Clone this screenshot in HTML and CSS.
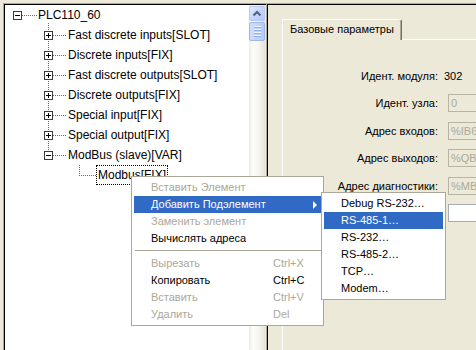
FILE: index.html
```html
<!DOCTYPE html>
<html>
<head>
<meta charset="utf-8">
<link rel="stylesheet" href="styles.css">
</head>
<body>
<div class="app">
  <div class="tree-pane">
    <div class="tree-inner">
      <div class="tree">
        <div class="row root"><span class="exp minus"></span><span class="conn"></span><span class="label">PLC110_60</span></div>
        <div class="children">
          <div class="row l1"><span class="exp plus"></span><span class="conn"></span><span class="label">Fast discrete inputs[SLOT]</span></div>
          <div class="row l1"><span class="exp plus"></span><span class="conn"></span><span class="label">Discrete inputs[FIX]</span></div>
          <div class="row l1"><span class="exp plus"></span><span class="conn"></span><span class="label">Fast discrete outputs[SLOT]</span></div>
          <div class="row l1"><span class="exp plus"></span><span class="conn"></span><span class="label">Discrete outputs[FIX]</span></div>
          <div class="row l1"><span class="exp plus"></span><span class="conn"></span><span class="label">Special input[FIX]</span></div>
          <div class="row l1"><span class="exp plus"></span><span class="conn"></span><span class="label">Special output[FIX]</span></div>
          <div class="row l1"><span class="exp minus"></span><span class="conn"></span><span class="label">ModBus (slave)[VAR]</span></div>
          <div class="row l2"><span class="conn2"></span><span class="label focus">Modbus[FIX]</span></div>
        </div>
      </div>
      <div class="vscroll">
        <div class="sb-btn"><svg width="14" height="13" viewBox="0 0 14 13"><path d="M3.5 8.5 L7 5 L10.5 8.5" fill="none" stroke="#4d6185" stroke-width="2"/></svg></div>
        <div class="sb-thumb"><i></i><i></i><i></i><i></i></div>
      </div>
    </div>
  </div>
  <div class="right-pane">
    <div class="right-inner">
      <div class="tabs"><div class="tab">Базовые параметры</div></div>
      <div class="tab-page">
        <div class="form">
          <div class="frow"><span class="flabel">Идент. модуля:</span><span class="fval">302</span></div>
          <div class="frow"><span class="flabel">Идент. узла:</span><span class="fbox dis">0</span></div>
          <div class="frow"><span class="flabel">Адрес входов:</span><span class="fbox dis">%IB6</span></div>
          <div class="frow"><span class="flabel">Адрес выходов:</span><span class="fbox dis">%QB</span></div>
          <div class="frow"><span class="flabel">Адрес диагностики:</span><span class="fbox dis">%MB</span></div>
          <div class="frow"><span class="flabel"></span><span class="fbox"></span></div>
        </div>
      </div>
    </div>
  </div>
</div>

<div class="menu ctx">
  <div class="mi dis"><span class="t">Вставить Элемент</span></div>
  <div class="mi hl"><span class="t">Добавить Подэлемент</span><span class="arr"></span></div>
  <div class="mi dis"><span class="t">Заменить элемент</span></div>
  <div class="mi"><span class="t">Вычислять адреса</span></div>
  <div class="sep"></div>
  <div class="mi dis"><span class="t">Вырезать</span><span class="k">Ctrl+X</span></div>
  <div class="mi"><span class="t">Копировать</span><span class="k">Ctrl+C</span></div>
  <div class="mi dis"><span class="t">Вставить</span><span class="k">Ctrl+V</span></div>
  <div class="mi dis"><span class="t">Удалить</span><span class="k">Del</span></div>
</div>

<div class="menu sub">
  <div class="mi"><span>Debug RS-232…</span></div>
  <div class="mi hl"><span>RS-485-1…</span></div>
  <div class="mi"><span>RS-232…</span></div>
  <div class="mi"><span>RS-485-2…</span></div>
  <div class="mi"><span>TCP…</span></div>
  <div class="mi"><span>Modem…</span></div>
</div>
</body>
</html>
```

FILE: styles.css
```css
body {
  margin: 0;
  width: 476px;
  height: 350px;
  overflow: hidden;
  position: relative;
  background: #ece9d8;
  font-family: "Liberation Sans", Arial, sans-serif;
  color: #000;
}

.app {
  display: flex;
  height: 350px;
  padding: 3px 0 0 3px;
  box-sizing: border-box;
}

/* ---------- tree pane ---------- */
.tree-pane {
  width: 263px;
  flex-shrink: 0;
  border-left: 1px solid #aca899;
  border-top: 1px solid #aca899;
  box-sizing: border-box;
}
.tree-inner {
  display: flex;
  height: 100%;
  border-left: 1px solid #000;
  border-top: 1px solid #000;
  padding-right: 1px;
  box-sizing: border-box;
}
.tree {
  width: 244px;
  background: #fff;
  font-size: 12px;
}
.row {
  display: flex;
  align-items: center;
  height: 20px;
  white-space: nowrap;
}
.row.root { padding-left: 8px; }
.row.l1 { padding-left: 39px; }
.row.l2 { padding-left: 74px; }

.exp {
  position: relative;
  width: 9px;
  height: 9px;
  box-sizing: border-box;
  border: 1px solid #3a3a3a;
  background: #fff;
  flex-shrink: 0;
}
.exp::before {
  content: "";
  position: absolute;
  left: 1px;
  top: 3px;
  width: 5px;
  height: 1px;
  background: #000;
}
.exp.plus::after {
  content: "";
  position: absolute;
  left: 3px;
  top: 1px;
  width: 1px;
  height: 5px;
  background: #000;
}
.conn {
  width: 15px;
  height: 20px;
  flex-shrink: 0;
  background: linear-gradient(to right, #6a6a6a 50%, transparent 50%) 0 10px / 2px 1px repeat-x;
}
.l1 .conn { width: 14px; }
.label { margin-left: 1px; line-height: 20px; }

.children { position: relative; }
.children::before {
  content: "";
  position: absolute;
  left: 43px;
  top: -2px;
  width: 1px;
  height: 128px;
  background: linear-gradient(to bottom, #6a6a6a 50%, transparent 50%) 0 0 / 1px 2px repeat-y;
}
.conn2 {
  width: 17px;
  height: 20px;
  flex-shrink: 0;
  background:
    linear-gradient(to right, #6a6a6a 50%, transparent 50%) 0 10px / 2px 1px repeat-x,
    linear-gradient(to bottom, #6a6a6a 50%, transparent 50%) 0 0 / 1px 2px repeat-y;
  background-size: 2px 1px, 1px 2px;
  background-position: 0 10px, 0 0;
  background-repeat: repeat-x, no-repeat;
}
.conn2 { position: relative; }
.conn2::before {
  content: "";
  position: absolute;
  left: 0;
  top: 0;
  width: 1px;
  height: 10px;
  background: linear-gradient(to bottom, #6a6a6a 50%, transparent 50%) 0 0 / 1px 2px repeat-y;
}
.label.focus {
  margin-left: 0;
  height: 20px;
  line-height: 18px;
  padding: 0 1px;
  box-sizing: border-box;
  border: 1px dotted #000;
}

/* ---------- scrollbar ---------- */
.vscroll {
  width: 16px;
  flex-shrink: 0;
  background: linear-gradient(to right, #eeede5 0%, #fdfdfa 25%, #f6f5ef 60%, #e6e4d8 100%);
  display: flex;
  flex-direction: column;
  align-items: center;
}
.sb-btn {
  width: 16px;
  height: 15px;
  margin-top: 1px;
  box-sizing: border-box;
  border: 1px solid #b7c9f2;
  border-radius: 2px;
  background: linear-gradient(135deg, #e3ebfe 0%, #c6d5fb 50%, #b5c8f5 100%);
  display: flex;
  align-items: center;
  justify-content: center;
}
.sb-btn svg { display: block; }
.sb-thumb {
  width: 16px;
  height: 19px;
  margin-top: 1px;
  box-sizing: border-box;
  border: 1px solid #9fb6ea;
  border-radius: 2px;
  background: linear-gradient(to right, #cfdcfd 0%, #c3d4fc 50%, #b7cbf7 100%);
  display: flex;
  flex-direction: column;
  align-items: center;
  justify-content: center;
  gap: 1px;
}
.sb-thumb i {
  display: block;
  width: 7px;
  height: 1px;
  background: #eef4fe;
  box-shadow: 0 1px 0 #8cb0f8;
  margin-bottom: 1px;
}

/* ---------- right pane ---------- */
.right-pane {
  flex: 1;
  border-left: 1px solid #aca899;
  border-top: 1px solid #aca899;
  box-sizing: border-box;
}
.right-inner {
  height: 100%;
  border-left: 1px solid #000;
  border-top: 1px solid #000;
  box-sizing: border-box;
  padding: 14px 0 0 14px;
  display: flex;
  flex-direction: column;
}
.tabs { display: flex; }
.tab {
  position: relative;
  z-index: 1;
  width: 120px;
  height: 21px;
  margin-bottom: -1px;
  box-sizing: border-box;
  padding-left: 7px;
  border-top: 1px solid #fff;
  border-left: 1px solid #fff;
  border-right: 1px solid #716f64;
  border-top-left-radius: 2px;
  border-top-right-radius: 2px;
  box-shadow: inset -1px 0 0 #aca899;
  background: #ece9d8;
  font-size: 11px;
  line-height: 18px;
  white-space: nowrap;
}
.tab-page {
  flex: 1;
  border-top: 1px solid #fff;
  border-left: 1px solid #fff;
  box-sizing: border-box;
  overflow: hidden;
}
.form { margin-top: 22px; font-size: 11px; }
.frow {
  display: flex;
  align-items: center;
  height: 27.5px;
  white-space: nowrap;
}
.flabel {
  width: 155px;
  flex-shrink: 0;
  text-align: right;
}
.fval { margin-left: 6px; }
.fbox {
  margin-left: 10px;
  width: 40px;
  height: 18px;
  flex-shrink: 0;
  box-sizing: border-box;
  border: 1px solid #a5acb2;
  background: #fff;
  padding-left: 2px;
  line-height: 16px;
  color: #000;
}
.fbox.dis {
  background: #ece9d8;
  border-color: #b7b4a5;
  color: #aca899;
}

/* ---------- menus ---------- */
.menu {
  position: absolute;
  background: #fff;
  border: 1px solid #aca899;
  padding: 2px;
  box-sizing: border-box;
  font-size: 11px;
  z-index: 10;
}
.ctx { left: 131px; top: 176px; width: 193px; }
.sub { left: 321px; top: 192px; width: 125px; z-index: 11; }
.mi {
  position: relative;
  display: flex;
  height: 17px;
  line-height: 17px;
  padding-left: 17px;
  white-space: nowrap;
  color: #000;
}
.mi.dis { color: #aca899; }
.mi.hl { background: #316ac5; color: #fff; }
.mi .t { width: 122px; flex-shrink: 0; }
.mi .arr {
  position: absolute;
  right: 4px;
  top: 5px;
  width: 0;
  height: 0;
  border-left: 4px solid #fff;
  border-top: 4px solid transparent;
  border-bottom: 4px solid transparent;
}
.sep { position: relative; height: 8px; }
.sep::before {
  content: "";
  position: absolute;
  left: 1px;
  right: 0;
  top: 3px;
  height: 1px;
  background: #aca899;
}
```
